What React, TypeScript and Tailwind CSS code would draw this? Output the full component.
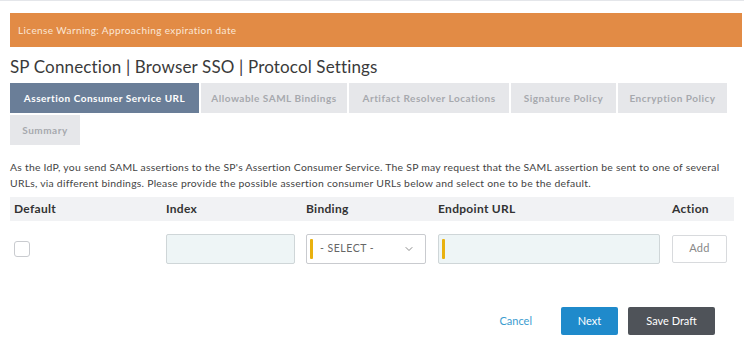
import { ChevronDown } from 'lucide-react';

const tabs = [
  { label: 'Assertion Consumer Service URL', w: 'w-[189px]', active: true },
  { label: 'Allowable SAML Bindings', w: 'w-[146px]' },
  { label: 'Artifact Resolver Locations', w: 'w-[160px]' },
  { label: 'Signature Policy', w: 'w-[105px]' },
  { label: 'Encryption Policy', w: 'w-[109px]' },
  { label: 'Summary', w: 'w-[70px]' },
];

export default function App() {
  return (
    <div className="w-[744px] h-[353px] bg-white overflow-hidden border-t border-[#e4e6ea] font-['Lato','Open_Sans',sans-serif] text-[#333]">
      <div className="px-[10px] pr-[2px]">
        <div className="mt-[12px] h-[34px] bg-[#e28b45] flex items-center pl-[8px] text-[10px] tracking-[0.4px] text-[#fbe7d6]">
          License Warning: Approaching expiration date
        </div>
      </div>

      <div className="px-[10px]">
        <h1 className="mt-[9px] text-[17px] leading-[22px] text-[#3a3a3a] tracking-[0.15px]">
          SP Connection | Browser SSO | Protocol Settings
        </h1>

        <div className="mt-[5px] flex flex-wrap gap-[2px] w-[720px]">
          {tabs.map((t) => (
            <div
              key={t.label}
              className={`${t.w} h-[30px] flex items-center justify-center text-[10px] tracking-[0.5px] font-bold ${
                t.active ? 'bg-[#6a7e98] text-white' : 'bg-[#e6e7ea] text-[#a6a9ae]'
              }`}
            >
              {t.label}
            </div>
          ))}
        </div>

        <p className="mt-[14px] text-[10.4px] leading-[16px] tracking-[0.25px] text-[#444]">
          As the IdP, you send SAML assertions to the SP's Assertion Consumer Service. The SP may request that the SAML assertion be sent to one of several
          <br />
          URLs, via different bindings. Please provide the possible assertion consumer URLs below and select one to be the default.
        </p>

        <div className="mt-[6px] h-[24px] bg-[#f1f2f4] flex items-center text-[12px] tracking-[0.3px] font-bold text-[#333]">
          <div className="w-[156px] pl-[4px]">Default</div>
          <div className="w-[140px]">Index</div>
          <div className="w-[132px]">Binding</div>
          <div className="w-[234px]">Endpoint URL</div>
          <div>Action</div>
        </div>

        <div className="mt-[12px] h-[31px] flex items-center">
          <div className="w-[156px] pl-[4px]">
            <div className="w-[16px] h-[16px] border border-[#c9cbcf] rounded-[3px] bg-white" />
          </div>
          <div className="w-[140px]">
            <div className="w-[129px] h-[30px] border border-[#cfd6d8] rounded-[2px] bg-[#eef5f6]" />
          </div>
          <div className="w-[132px]">
            <div className="w-[120px] h-[30px] border border-[#c9cbcf] rounded-[2px] bg-white flex items-center pl-[3px] pr-[10px]">
              <div className="w-[3px] h-[20px] bg-[#e9b10f] rounded-[1px]" />
              <span className="ml-[7px] text-[10.5px] tracking-[0.5px] text-[#666] flex-1">- SELECT -</span>
              <ChevronDown size={12} strokeWidth={1.5} className="text-[#666]" />
            </div>
          </div>
          <div className="w-[234px]">
            <div className="w-[222px] h-[30px] border border-[#cfd6d8] rounded-[2px] bg-[#eef5f6] flex items-center pl-[3px]">
              <div className="w-[3px] h-[20px] bg-[#e9b10f] rounded-[1px]" />
            </div>
          </div>
          <div>
            <button className="w-[55px] h-[28px] border border-[#d8dadd] rounded-[2px] bg-white text-[11px] tracking-[0.3px] text-[#888]">
              Add
            </button>
          </div>
        </div>

        <div className="mt-[43px] flex items-center justify-end pr-[19px]">
          <span className="text-[11px] text-[#3b9ccf] mr-[29px]">Cancel</span>
          <button className="w-[57px] h-[28px] rounded-[2px] bg-[#1f8acb] text-white text-[11px] mr-[10px]">
            Next
          </button>
          <button className="w-[87px] h-[28px] rounded-[2px] bg-[#4f5359] text-white text-[11px]">
            Save Draft
          </button>
        </div>
      </div>
    </div>
  );
}
